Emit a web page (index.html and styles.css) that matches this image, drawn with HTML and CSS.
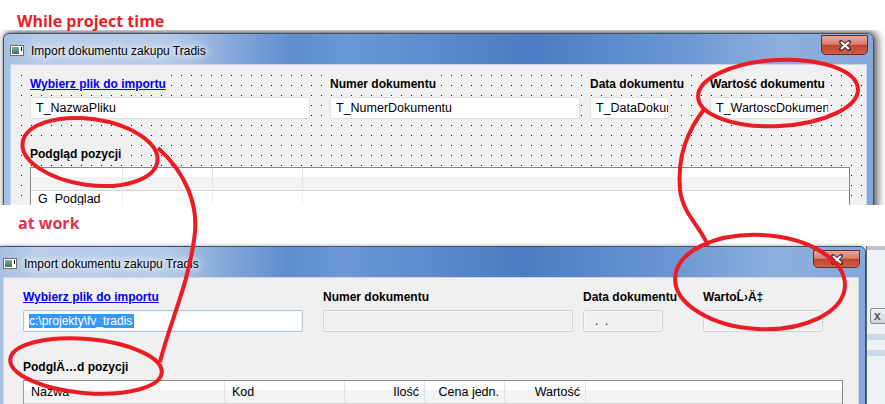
FILE: index.html
```html
<!DOCTYPE html>
<html lang="pl">
<head>
	<meta charset="UTF-8">
<link rel="stylesheet" href="styles.css">
</head>
<body>
<div class="page">

	<div class="note note1">While project time</div>

	<div class="shot shot1">
		<div class="win w1">
			<div class="titlebar">
				<span class="appicon"><i></i></span>
				<span class="title">Import dokumentu zakupu Tradis</span>
				<span class="close">
					<svg width="14" height="11" viewBox="0 0 14 11"><path d="M3,2 L11,9 M11,2 L3,9" stroke="#3a3a3a" stroke-width="4" stroke-linecap="round"/><path d="M3,2 L11,9 M11,2 L3,9" stroke="#fff" stroke-width="2"/></svg>
				</span>
			</div>
			<div class="client dots">
				<div class="fields">
					<div class="field f1"><span class="lbl link">Wybierz plik do importu</span><div class="box">T_NazwaPliku</div></div>
					<div class="field f2"><span class="lbl">Numer dokumentu</span><div class="box">T_NumerDokumentu</div></div>
					<div class="field f3"><span class="lbl">Data dokumentu</span><div class="box">T_DataDokumentu</div></div>
					<div class="field f4"><span class="lbl">Wartość dokumentu</span><div class="box">T_WartoscDokumentu</div></div>
				</div>
				<div class="lbl sect">Podgląd pozycji</div>
				<div class="grid">
					<div class="ghead cols1"><span></span><span></span><span></span><span></span></div>
					<div class="grow cols1"><span>G_Podglad</span><span></span><span></span><span></span></div>
				</div>
			</div>
		</div>
	</div>

	<div class="note note2">at work</div>

	<div class="shot shot2">
		<div class="win w2">
			<div class="titlebar">
				<span class="appicon"><i></i></span>
				<span class="title">Import dokumentu zakupu Tradis</span>
				<span class="close">
					<svg width="14" height="11" viewBox="0 0 14 11"><path d="M3,2 L11,9 M11,2 L3,9" stroke="#3a3a3a" stroke-width="4" stroke-linecap="round"/><path d="M3,2 L11,9 M11,2 L3,9" stroke="#fff" stroke-width="2"/></svg>
				</span>
			</div>
			<div class="client">
				<div class="fields">
					<div class="field f1"><span class="lbl link">Wybierz plik do importu</span><div class="box focus"><span class="sel">c:\projekty\fv_tradis</span></div></div>
					<div class="field f2"><span class="lbl">Numer dokumentu</span><div class="box"></div></div>
					<div class="field f3"><span class="lbl">Data dokumentu</span><div class="box date">.&nbsp;&nbsp;.</div></div>
					<div class="field f4"><span class="lbl">WartoĹ›Ä‡</span><div class="box"></div></div>
				</div>
				<div class="lbl sect">PodglÄ…d pozycji</div>
				<div class="grid">
					<div class="ghead cols2"><span>Nazwa</span><span>Kod</span><span class="num">Ilość</span><span class="num">Cena jedn.</span><span class="num">Wartość</span><span></span></div>
				</div>
			</div>
		</div>
		<div class="behind">
			<div class="bh-top"></div>
			<div class="bh-btn">x</div>
			<div class="bh-line"></div>
			<div class="bh-line"></div>
		</div>
	</div>

	<svg class="marks" width="885" height="404" viewBox="0 0 885 404">
		<g fill="none" stroke="#ed1c24" stroke-width="4">
			<ellipse cx="90" cy="152" rx="68" ry="33" transform="rotate(8 90 152)"/>
			<ellipse cx="778" cy="93" rx="80" ry="33" transform="rotate(-3 778 93)"/>
			<ellipse cx="86" cy="366" rx="76" ry="27" transform="rotate(5 86 366)"/>
			<ellipse cx="760" cy="282" rx="85" ry="47" transform="rotate(3 760 282)"/>
			<path d="M158,148 C185,172 200,205 194,240 C188,285 170,322 160,362"/>
			<path d="M705,108 C688,130 677,155 680,190 C683,215 702,228 708,246"/>
		</g>
	</svg>

</div>
</body>
</html>
```

FILE: styles.css
```css
*{ margin:0; padding:0; box-sizing:border-box; }
body{ background:#fff; font-family:"Liberation Sans", Arial, sans-serif; font-size:12px; color:#000; }
.page{ position:relative; width:885px; height:404px; overflow:hidden; }

/* red notes */
.note{ font-family:"Open Sans", "Liberation Sans", sans-serif; font-weight:700; font-size:16px; line-height:20px; padding-left:17px; }
.note1{ height:30px; padding-top:11px; color:#ee1c25; }
.note2{ height:38px; padding-top:8px; padding-left:18px; color:#e6304e; }

/* screenshots */
.shot{ overflow:hidden; }
.shot1{ height:175px; padding:3px 0 0 3px; }
.shot2{ height:161px; padding-top:3px; display:flex; }

/* window frame */
.win{ border:1px solid #3d526f; border-radius:6px 6px 0 0; padding:0 6px; flex:none;
	background:linear-gradient(90deg, #a5bfe2 0, #bacde9 40px, #b3c9e7 170px, #84a7d9 230px, #5e8ecf 290px, #6b98d5 345px, #5d8ccf 425px, #4b7cc3 525px, #5a8acd 600px, #6d97d4 680px, #8eb0de 780px, #84a7da 871px); }
.w1{ width:871px; height:240px; box-shadow:3px 0 8px 1px rgba(0,0,0,.6), 0 -1px 3px rgba(0,0,0,.25); }
.w2{ width:870px; height:240px; margin-left:-4px; box-shadow:0 -1px 3px rgba(0,0,0,.25); }

.titlebar{ height:30px; margin:0 -6px; padding:0 5px 0 6px; display:flex; align-items:center; }
.appicon{ width:14px; height:11px; border:1px solid #6d6d6d; background:#fff; position:relative; margin-right:7px; margin-top:3px; }
.appicon i{ position:absolute; left:1px; top:1px; width:7px; height:7px; background:linear-gradient(#86aba0, #3f6f6a); }
.appicon:after{ content:""; position:absolute; right:1px; top:1px; width:1px; height:4px; background:#000; }
.title{ font-size:12px; text-shadow:0 0 5px #fff, 0 0 9px #fff, 0 0 14px rgba(255,255,255,.9); margin-top:3px; }
.close{ margin-left:auto; align-self:flex-start; margin-top:1px; width:47px; height:20px; display:flex; align-items:center; justify-content:center;
	border:1px solid #6e2a20; border-radius:0 0 5px 5px;
	background:linear-gradient(#e6a597 0, #d88272 45%, #c3432d 52%, #cf5f48 100%); }
.w2 .close{ margin-top:3px; height:18px; }

/* client area */
.client{ position:relative; height:220px; background:#f0f0f0; border:1px solid #c9d6e8; }
.dots:before{ content:""; position:absolute; left:10px; top:10px; right:0; bottom:0;
	background:repeating-linear-gradient(90deg, #000 0 1px, transparent 1px 10px);
	-webkit-mask:repeating-linear-gradient(180deg, #000 0 1px, transparent 1px 10px);
	mask:repeating-linear-gradient(180deg, #000 0 1px, transparent 1px 10px); }

.fields{ display:flex; padding-left:19px; margin-top:9px; }
.field{ display:flex; flex-direction:column; align-items:flex-start; }
.f1{ width:280px; }
.f2{ width:250px; margin-left:20px; }
.f3{ width:80px; margin-left:10px; }
.f4{ width:120px; margin-left:40px; }

.lbl{ position:relative; font-weight:bold; height:20px; line-height:20px; white-space:nowrap; background:#f0f0f0; padding-right:3px; }
.link{ color:#00f; text-decoration:underline; }
.sect{ width:max-content; margin:25px 0 0 19px; }

.box{ position:relative; width:100%; height:22px; margin-top:3px; background:#fff; border:1px solid #e1e1e1; border-radius:2px;
	padding-left:5px; line-height:20px; font-size:12.5px; white-space:nowrap; overflow:hidden; }
.w1 .f4 .box, .w1 .f3 .box{ width:calc(100% - 1px); }
.w2 .box{ background:#f0f0f0; border-color:#d4d4d4; box-shadow:inset 0 0 0 1px #f7f7f7; font-size:12px; }
.w2 .box.focus{ background:#fff; border-color:#a9c6e8; }
.sel{ background:#3399ff; color:#fff; padding-right:1px; border-right:1px solid #c0701e; }
.box.date{ padding-left:11px; }

/* grid */
.grid{ position:relative; width:820px; height:60px; margin:3px 0 0 19px; background:#fff; border:1px solid #828790; border-bottom:none; }
.w2 .grid{ border-left-color:#9a9ea6; }
.cols1{ display:grid; grid-template-columns:92px 90px 90px 1fr; }
.cols2{ display:grid; grid-template-columns:201px 120px 80px 80px 81px 1fr; }
.ghead{ height:23px; border-bottom:1px solid #d5d5d5; background:linear-gradient(#fff 0 9px, #f2f3f5 9px); }
.ghead span{ border-right:1px solid #e3e4e7; padding:0 6px 0 7px; line-height:22px; font-size:12.5px; white-space:nowrap; }
.ghead span.num{ text-align:right; padding-right:5px; }
.ghead span:last-child, .grow span:last-child{ border-right:none; }
.grow{ height:20px; }
.grow span{ border-right:1px solid #efefef; padding-left:7px; line-height:16px; font-size:12.5px; }

/* window lying behind */
.behind{ flex:1; display:flex; flex-direction:column; background:#eef1f5; border-left:1px solid #56657a; }
.bh-top{ height:4px; background:#c3c3c3; }
.bh-btn{ margin-top:58px; margin-left:3px; height:16px; border:1px solid #8a8f96; border-right:none; border-radius:3px 0 0 3px;
	background:linear-gradient(#f4f4f4, #cfd3d8); color:#555; font-weight:bold; font-size:12px; line-height:14px; padding-left:3px; }
.bh-line{ height:6px; margin-top:10px; background:#cdd8e8; }

.marks{ position:absolute; left:0; top:0; pointer-events:none; }
```
